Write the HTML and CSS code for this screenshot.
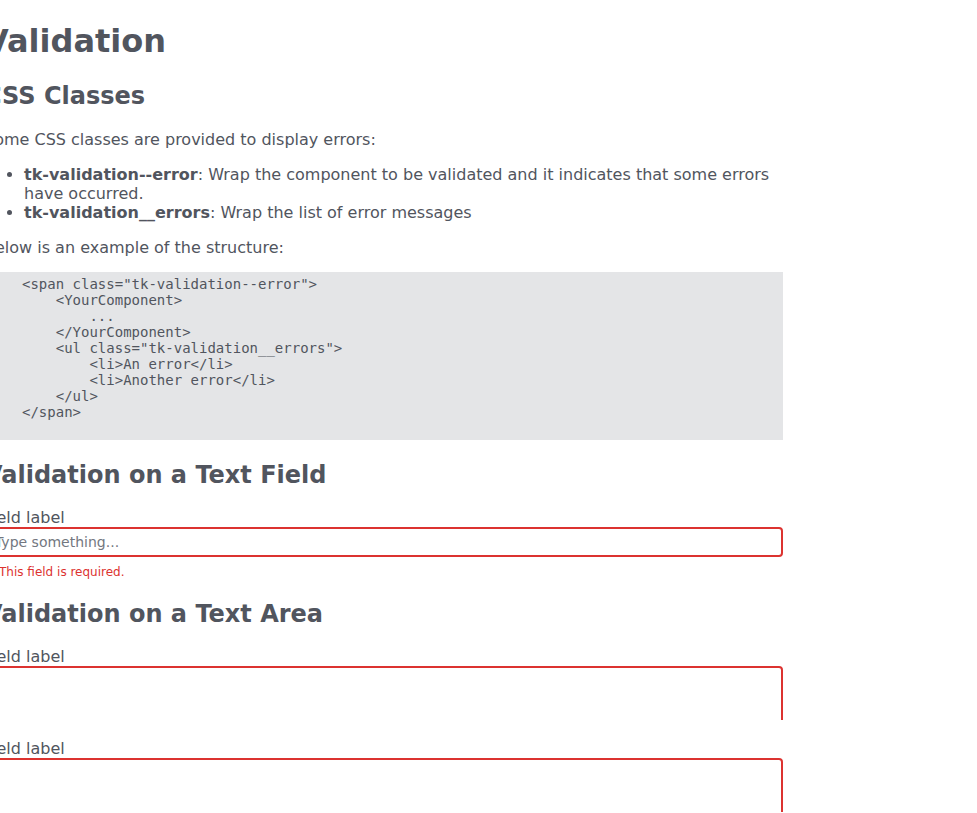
FILE: index.html
```html
<!DOCTYPE html>
<html lang="en">
<head>
<meta charset="utf-8">
<title>Validation</title>
<link rel="stylesheet" href="styles.css">
</head>
<body>
<main class="page">
  <h1>Validation</h1>
  <h2>CSS Classes</h2>
  <p>Some CSS classes are provided to display errors:</p>
  <ul class="doc-list">
    <li><strong>tk-validation--error</strong>: Wrap the component to be validated and it indicates that some errors have occurred.</li>
    <li><strong>tk-validation__errors</strong>: Wrap the list of error messages</li>
  </ul>
  <p>Below is an example of the structure:</p>
  <pre class="code">&lt;span class="tk-validation--error"&gt;
    &lt;YourComponent&gt;
        ...
    &lt;/YourComponent&gt;
    &lt;ul class="tk-validation__errors"&gt;
        &lt;li&gt;An error&lt;/li&gt;
        &lt;li&gt;Another error&lt;/li&gt;
    &lt;/ul&gt;
&lt;/span&gt;</pre>

  <h2>Validation on a Text Field</h2>
  <div class="tk-validation--error">
    <label class="field-label" for="f1">Field label</label>
    <input class="text-input" id="f1" type="text" placeholder="Type something...">
    <ul class="tk-validation__errors">
      <li>This field is required.</li>
    </ul>
  </div>

  <h2>Validation on a Text Area</h2>
  <div class="tk-validation--error">
    <label class="field-label" for="t1">Field label</label>
    <div class="area-clip"><textarea class="text-area" id="t1"></textarea></div>
  </div>
  <div class="tk-validation--error">
    <label class="field-label" for="t2">Field label</label>
    <div class="area-clip"><textarea class="text-area" id="t2"></textarea></div>
  </div>
</main>
</body>
</html>
```

FILE: styles.css
```css
html, body {
  background: #ffffff;
  margin: 0;
  padding: 0;
}
body {
  font-family: "DejaVu Sans", sans-serif;
  font-size: 16px;
  color: #51555e;
}
.page {
  display: flow-root;
  width: 799px;
  margin-left: -16px;
}
h1 {
  font-size: 32px;
  font-weight: bold;
  margin: 22px 0 22px;
  color: #51555e;
}
h2 {
  font-size: 24px;
  font-weight: bold;
  margin: 20px 0;
  color: #51555e;
}
p {
  margin: 16px 0 15px;
}
.doc-list {
  margin: 16px 0;
  padding-left: 40px;
}
.code {
  font-family: "DejaVu Sans Mono", monospace;
  font-size: 14px;
  background: #e4e5e7;
  color: #51555e;
  margin: 14px 0 21px;
  padding: 4px 0 20px 38px;
}
.field-label {
  display: block;
  font-size: 16px;
  line-height: 18px;
}
.text-input {
  display: block;
  box-sizing: border-box;
  width: 100%;
  height: 30px;
  margin: 0;
  padding: 5px 9px;
  border: 2px solid #dc3330;
  border-radius: 4px;
  font-family: "DejaVu Sans", sans-serif;
  font-size: 14px;
  color: #51555e;
  background: #fff;
  outline: none;
}
.text-input::placeholder {
  color: #737780;
}
.tk-validation__errors {
  list-style: none;
  margin: 8px 0 21px 0;
  padding-left: 15px;
  color: #dc3330;
  font-size: 12px;
}
.area-clip {
  height: 54px;
  overflow: hidden;
  margin-bottom: 20px;
}
.text-area {
  display: block;
  box-sizing: border-box;
  width: 100%;
  height: 90px;
  margin: 0;
  padding: 5px 9px;
  border: 2px solid #dc3330;
  border-radius: 4px;
  resize: none;
  font-family: "DejaVu Sans", sans-serif;
  font-size: 14px;
  background: #fff;
  outline: none;
}
```
